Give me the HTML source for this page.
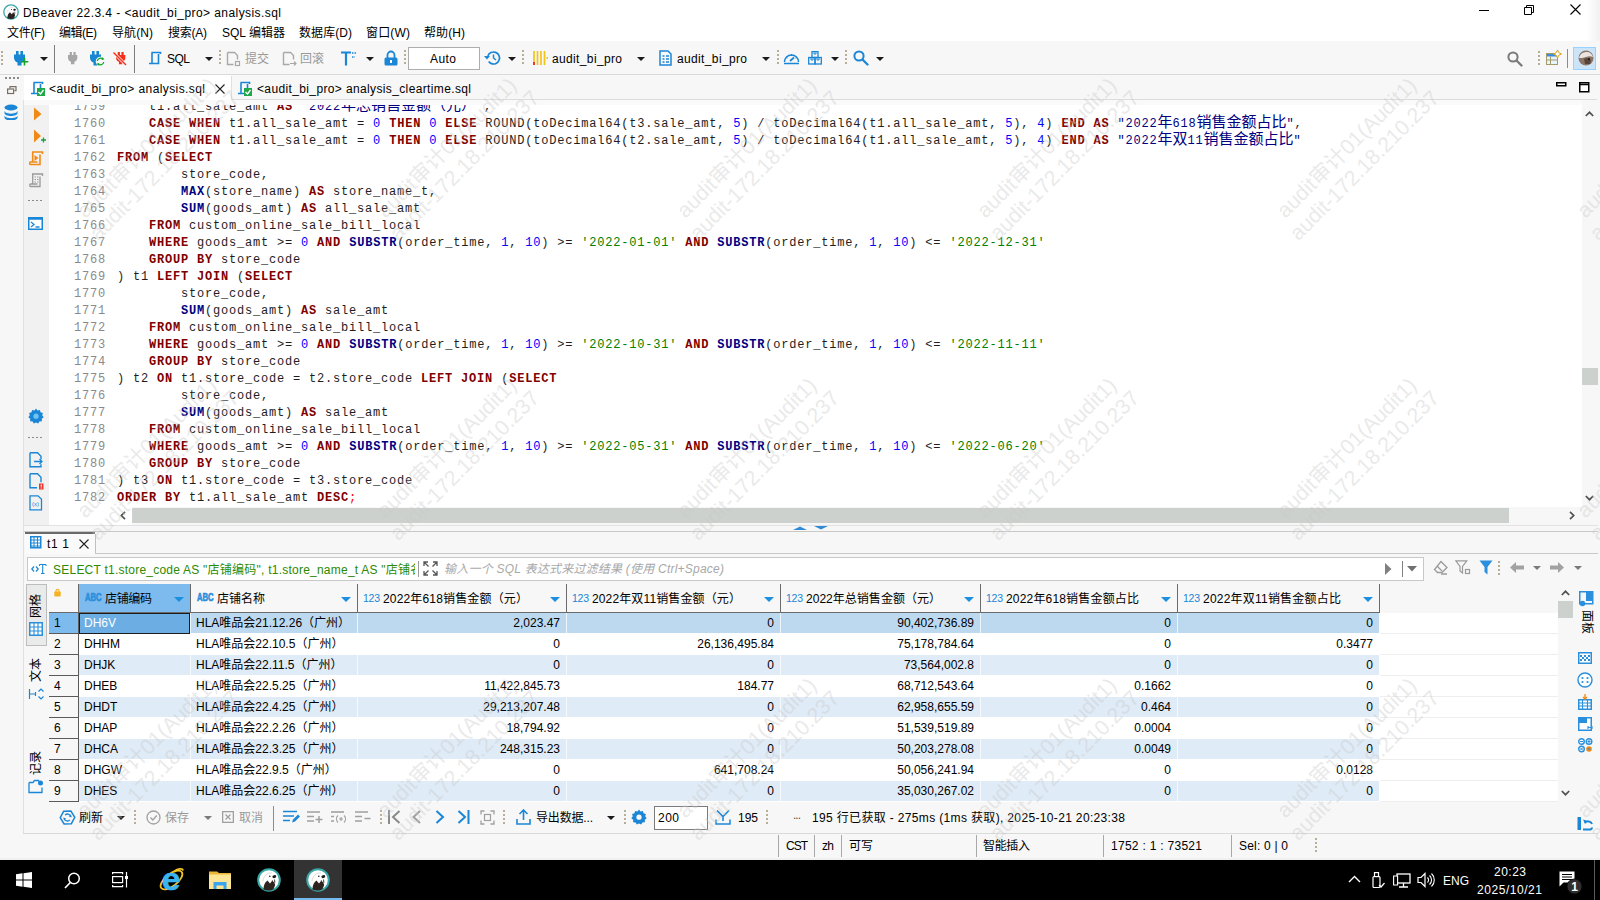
<!DOCTYPE html>
<html lang="zh-CN"><head><meta charset="utf-8"><title>DBeaver 22.3.4 - &lt;audit_bi_pro&gt; analysis.sql</title>
<style>
html,body{margin:0;padding:0}
body{width:1600px;height:900px;position:relative;overflow:hidden;background:#f7f7f7;font-family:"Liberation Sans","Noto Sans CJK SC",sans-serif;font-size:12px;color:#000}
.t{position:absolute;white-space:pre;display:block}
.g{color:#9a9a9a}
#ed{position:absolute;left:49px;top:105px;width:1533px;height:402px;background:#fff;overflow:hidden}
.ln{position:absolute;left:0;height:17px;line-height:19px;white-space:pre;font-family:"Liberation Mono","Noto Sans CJK SC",monospace;font-size:12px;letter-spacing:.8px;color:#1e1e1e;padding-left:68px}
.ln .no{position:absolute;left:25px;color:#8a8a8a}
.ln b.k{color:#7f0000}
.ln b.f{color:#000080}
.ln .n{color:#0000ff}
.ln .s{color:#008000}
.ln .q{color:#000080}
.ln .r{color:#ff0000}
.ln i.c{font-style:normal;font-size:15px;letter-spacing:0;line-height:17px;vertical-align:0}
.wm{position:absolute;width:300px;height:300px;pointer-events:none}
.wm div{position:absolute;left:-44px;top:132px;width:400px;text-align:center;transform:rotate(-45deg);color:rgba(200,200,200,.4);font-size:21.3px;line-height:25px;white-space:pre}
.cell{position:absolute;height:21px;line-height:21px;white-space:pre;overflow:hidden;box-sizing:border-box}
.num{text-align:right}
</style></head>
<body>
<div class="" style="position:absolute;left:0px;top:0px;width:1600px;height:41px;background:#fff;"></div>
<div class="" style="position:absolute;left:1586px;top:0px;width:14px;height:41px;background:linear-gradient(to right,#fff,#f1f1f1);"></div>
<svg style="position:absolute;left:3px;top:4px;" width="16" height="16" viewBox="0 0 24 24"><circle cx="12" cy="12" r="10.800" fill="#fff" stroke="#3aa7a7" stroke-width="2"/><path d="M6.500 21.500C6.500 17 8 14 10.500 12.500l2.500 3 2-2.500 2.200 1.200 1 2.800-1.700 4.200C14 23 9.500 23 6.500 21.500z" fill="#2d2420"/><path d="M15.300 12.300l1 4.200M17.500 11.500l.4 3.300" stroke="#2d2420" stroke-width=".9"/><ellipse cx="17.300" cy="8.600" rx="2" ry="1.500" fill="#1c1c1c" transform="rotate(-15 17.300 8.600)"/><circle cx="12.800" cy="8.300" r=".8" fill="#1c1c1c"/><path d="M6 13c.5-5 4-8.500 9-8" fill="none" stroke="#d8d4d0" stroke-width=".8"/></svg>
<span id="t1" class="t " style="left:23px;top:4.5px;line-height:16px;height:16px;letter-spacing:0.431px;">DBeaver 22.3.4 - &lt;audit_bi_pro&gt; analysis.sql</span>
<svg style="position:absolute;left:1479px;top:4px;" width="11" height="12" viewBox="0 0 11 12"><path d="M0 6.5h10" stroke="#000" stroke-width="1"/></svg>
<svg style="position:absolute;left:1524px;top:4px;" width="11" height="12" viewBox="0 0 11 12"><path d="M2.5 3.5v-2h7v7h-2M0.5 3.5h7v7h-7z" fill="none" stroke="#000" stroke-width="1"/></svg>
<svg style="position:absolute;left:1570px;top:4px;" width="11" height="12" viewBox="0 0 11 12"><path d="M0.5 0.5l10 10M10.5 0.5l-10 10" stroke="#000" stroke-width="1.1"/></svg>
<span id="t2" class="t " style="left:7px;top:25px;line-height:16px;height:16px;letter-spacing:-0.332px;">文件(F)</span>
<span id="t3" class="t " style="left:59px;top:25px;line-height:16px;height:16px;letter-spacing:-0.500px;">编辑(E)</span>
<span id="t4" class="t " style="left:112px;top:25px;line-height:16px;height:16px;letter-spacing:0.082px;">导航(N)</span>
<span id="t5" class="t " style="left:168px;top:25px;line-height:16px;height:16px;letter-spacing:-0.250px;">搜索(A)</span>
<span id="t6" class="t " style="left:222px;top:25px;line-height:16px;height:16px;letter-spacing:0.016px;">SQL 编辑器</span>
<span id="t7" class="t " style="left:299px;top:25px;line-height:16px;height:16px;letter-spacing:0.066px;">数据库(D)</span>
<span id="t8" class="t " style="left:366px;top:25px;line-height:16px;height:16px;letter-spacing:0.168px;">窗口(W)</span>
<span id="t9" class="t " style="left:424px;top:25px;line-height:16px;height:16px;letter-spacing:0.082px;">帮助(H)</span>
<div class="" style="position:absolute;left:0px;top:41px;width:1600px;height:33px;background:#f7f7f7;"></div>
<div class="" style="position:absolute;left:0px;top:74px;width:1600px;height:1px;background:#dadada;"></div>
<div class="" style="position:absolute;left:1px;top:51px;width:2px;height:15px;background:repeating-linear-gradient(to bottom,#b8ad96 0 2px,transparent 2px 4px);"></div>
<svg style="position:absolute;left:14px;top:51px;" width="16" height="16" viewBox="0 0 16 16"><g transform="scale(1)"><path d="M2 0h2.600v4H2zM6.400 0H9v4H6.400z" fill="#1787d3"/><path d="M0 3.500h11v3.200c0 2.800-1.800 4.300-3.500 4.800V14.500h-4V11.500C1.800 11 0 9.500 0 6.700z" fill="#1787d3"/></g><rect x="6" y="6.500" width="9" height="9" fill="#f7f7f7" opacity=".0"/><path d="M10.500 7v7.500M6.800 10.700h7.500" stroke="#12a52e" stroke-width="1.600"/></svg>
<svg style="position:absolute;left:40px;top:57px;" width="8" height="4" viewBox="0 0 8 4"><path d="M0 0h8l-4 4z" fill="#1a1a1a"/></svg>
<div class="" style="position:absolute;left:54px;top:45px;width:1px;height:28px;background:#7c7c7c;"></div>
<svg style="position:absolute;left:68px;top:52px;" width="16" height="16" viewBox="0 0 16 16"><g transform="scale(.85)"><path d="M2 0h2.600v4H2zM6.400 0H9v4H6.400z" fill="#a6a6a6"/><path d="M0 3.500h11v3.200c0 2.800-1.800 4.300-3.500 4.800V14.500h-4V11.500C1.800 11 0 9.500 0 6.700z" fill="#a6a6a6"/></g></svg>
<svg style="position:absolute;left:90px;top:51px;" width="16" height="16" viewBox="0 0 16 16"><g transform="scale(1)"><path d="M2 0h2.600v4H2zM6.400 0H9v4H6.400z" fill="#1787d3"/><path d="M0 3.500h11v3.200c0 2.800-1.800 4.300-3.500 4.800V14.500h-4V11.500C1.800 11 0 9.500 0 6.700z" fill="#1787d3"/></g><circle cx="10.500" cy="10.500" r="4.800" fill="#f7f7f7"/><path d="M7.300 10a3.300 3.300 0 0 1 5.800-1.700M13.700 11a3.300 3.300 0 0 1-5.800 1.700" fill="none" stroke="#12a52e" stroke-width="1.300"/><path d="M12.300 6.300l2.200 2-2.900.8zM8.700 14.700l-2.200-2 2.900-.8z" fill="#12a52e"/></svg>
<svg style="position:absolute;left:113px;top:52px;" width="16" height="16" viewBox="0 0 16 16"><g transform="translate(3 0) scale(.85)"><path d="M2 0h2.600v4H2zM6.400 0H9v4H6.400z" fill="#f3301b"/><path d="M0 3.500h11v3.200c0 2.800-1.800 4.300-3.500 4.800V14.500h-4V11.500C1.800 11 0 9.500 0 6.700z" fill="#f3301b"/></g><path d="M1.500 1.500l11 11" stroke="#f7f7f7" stroke-width="2.800"/><path d="M0.500 0.500l12.500 12.500" stroke="#f3301b" stroke-width="1.400"/></svg>
<div class="" style="position:absolute;left:134px;top:45px;width:1px;height:28px;background:#7c7c7c;"></div>
<svg style="position:absolute;left:147px;top:50px;" width="16" height="16" viewBox="0 0 16 16"><path d="M4.500 2.500h9v1.500M5 2.500v10.500M2 13.500h9.500V4" fill="none" stroke="#1b86d6" stroke-width="1.600"/></svg>
<span id="t10" class="t " style="left:167px;top:51px;line-height:16px;height:16px;letter-spacing:-0.508px;">SQL</span>
<svg style="position:absolute;left:205px;top:57px;" width="8" height="4" viewBox="0 0 8 4"><path d="M0 0h8l-4 4z" fill="#1a1a1a"/></svg>
<div class="" style="position:absolute;left:219px;top:50px;width:2px;height:15px;background:repeating-linear-gradient(to bottom,#b8ad96 0 2px,transparent 2px 4px);"></div>
<svg style="position:absolute;left:226px;top:51px;" width="16" height="16" viewBox="0 0 16 16"><path d="M1.500 1.500h7l3 3v4M1.500 1.500v12h6" fill="none" stroke="#a8a8a8" stroke-width="1.400"/><rect x="9.500" y="10.500" width="4" height="4" fill="none" stroke="#a8a8a8" stroke-width="1.200"/></svg>
<span id="t11" class="t g" style="left:245px;top:51px;line-height:16px;height:16px;letter-spacing:-0.016px;">提交</span>
<svg style="position:absolute;left:282px;top:51px;" width="16" height="16" viewBox="0 0 16 16"><path d="M1.500 1.500h7l3 3v4M1.500 1.500v12h6" fill="none" stroke="#a8a8a8" stroke-width="1.400"/><path d="M8 12.500h6M12 10.500l2 2-2 2" fill="none" stroke="#a8a8a8" stroke-width="1.200"/></svg>
<span id="t12" class="t g" style="left:300px;top:51px;line-height:16px;height:16px;letter-spacing:-0.016px;">回滚</span>
<svg style="position:absolute;left:341px;top:50px;" width="16" height="16" viewBox="0 0 16 16"><path d="M0 2.500h10M5 2.500v13" stroke="#1b86d6" stroke-width="2.200"/><path d="M11 3h5M11 7h3" stroke="#1b86d6" stroke-width="1.400" stroke-dasharray="1.500 1"/></svg>
<svg style="position:absolute;left:366px;top:57px;" width="8" height="4" viewBox="0 0 8 4"><path d="M0 0h8l-4 4z" fill="#1a1a1a"/></svg>
<svg style="position:absolute;left:384px;top:50px;" width="14" height="16" viewBox="0 0 14 16"><path d="M3.500 8V5a3.500 3.500 0 0 1 7 0v3" fill="none" stroke="#1b86d6" stroke-width="1.800"/><rect x="0.500" y="7.500" width="13" height="8" rx="1.500" fill="#1b86d6"/><rect x="6" y="10" width="2" height="3" fill="#fff"/></svg>
<div class="" style="position:absolute;left:404px;top:50px;width:2px;height:15px;background:repeating-linear-gradient(to bottom,#b8ad96 0 2px,transparent 2px 4px);"></div>
<div class="" style="position:absolute;left:408px;top:47px;width:70px;height:21px;background:#fff;border:1px solid #adadad;"></div>
<span id="t13" class="t " style="left:430px;top:51px;line-height:16px;height:16px;letter-spacing:0.438px;">Auto</span>
<svg style="position:absolute;left:484px;top:50px;" width="17" height="16" viewBox="0 0 17 16"><circle cx="9.500" cy="8" r="6" fill="none" stroke="#1b86d6" stroke-width="1.700" stroke-dasharray="31 6.700" transform="rotate(200 9.500 8)"/><path d="M9.500 4.500V8l2.500 2" fill="none" stroke="#1b86d6" stroke-width="1.500"/><path d="M0 6l3 3.500L6 6z" fill="#1b86d6"/></svg>
<svg style="position:absolute;left:508px;top:57px;" width="8" height="4" viewBox="0 0 8 4"><path d="M0 0h8l-4 4z" fill="#1a1a1a"/></svg>
<div class="" style="position:absolute;left:522px;top:50px;width:2px;height:15px;background:repeating-linear-gradient(to bottom,#b8ad96 0 2px,transparent 2px 4px);"></div>
<svg style="position:absolute;left:532px;top:50px;" width="16" height="16" viewBox="0 0 16 16"><path d="M2 1v14M5.500 1v14M9 1v14M12.500 1v14" stroke="#f2c31a" stroke-width="1.700"/><rect x="1" y="12" width="2" height="3" fill="#e8372c"/><rect x="14.500" y="7" width="1.500" height="2" fill="#f2c31a"/></svg>
<span id="t14" class="t " style="left:552px;top:51px;line-height:16px;height:16px;letter-spacing:0.358px;">audit_bi_pro</span>
<svg style="position:absolute;left:637px;top:57px;" width="8" height="4" viewBox="0 0 8 4"><path d="M0 0h8l-4 4z" fill="#1a1a1a"/></svg>
<svg style="position:absolute;left:659px;top:50px;" width="13" height="16" viewBox="0 0 13 16"><path d="M1 1h8l3 3v11H1z" fill="none" stroke="#1b86d6" stroke-width="1.500"/><path d="M3.500 6h2M7 6h3M3.500 9h2M7 9h3M3.500 12h2M7 12h3" stroke="#1b86d6" stroke-width="1.300"/></svg>
<span id="t15" class="t " style="left:677px;top:51px;line-height:16px;height:16px;letter-spacing:0.358px;">audit_bi_pro</span>
<svg style="position:absolute;left:762px;top:57px;" width="8" height="4" viewBox="0 0 8 4"><path d="M0 0h8l-4 4z" fill="#1a1a1a"/></svg>
<div class="" style="position:absolute;left:777px;top:50px;width:2px;height:15px;background:repeating-linear-gradient(to bottom,#b8ad96 0 2px,transparent 2px 4px);"></div>
<svg style="position:absolute;left:783px;top:51px;" width="17" height="14" viewBox="0 0 17 14"><path d="M1.500 11a7 7 0 0 1 14 0M1 12.500h15" fill="none" stroke="#1b86d6" stroke-width="1.600"/><path d="M8.500 3v2M3 6l1.500 1M14 6l-1.500 1" stroke="#1b86d6" stroke-width="1"/><path d="M7 10l4-3.500" stroke="#1b86d6" stroke-width="1.800"/></svg>
<svg style="position:absolute;left:808px;top:51px;" width="14" height="14" viewBox="0 0 14 14"><rect x="4" y="0.500" width="6" height="6" fill="none" stroke="#1b86d6" stroke-width="1.300"/><rect x="0.700" y="6.500" width="6.300" height="6.500" fill="none" stroke="#1b86d6" stroke-width="1.300"/><rect x="7" y="6.500" width="6.300" height="6.500" fill="none" stroke="#1b86d6" stroke-width="1.300"/><path d="M6 1v2h2V1M3 7v2h2V7M9 7v2h2V7" fill="none" stroke="#1b86d6" stroke-width="1"/></svg>
<svg style="position:absolute;left:831px;top:57px;" width="8" height="4" viewBox="0 0 8 4"><path d="M0 0h8l-4 4z" fill="#1a1a1a"/></svg>
<div class="" style="position:absolute;left:845px;top:50px;width:2px;height:15px;background:repeating-linear-gradient(to bottom,#b8ad96 0 2px,transparent 2px 4px);"></div>
<svg style="position:absolute;left:853px;top:50px;" width="16" height="16" viewBox="0 0 16 16"><circle cx="6" cy="6" r="4.600" fill="none" stroke="#1b86d6" stroke-width="2"/><path d="M9.500 9.500l5 5" stroke="#1b86d6" stroke-width="2.3" stroke-linecap="round"/></svg>
<svg style="position:absolute;left:876px;top:57px;" width="8" height="4" viewBox="0 0 8 4"><path d="M0 0h8l-4 4z" fill="#1a1a1a"/></svg>
<svg style="position:absolute;left:1507px;top:51px;" width="16" height="16" viewBox="0 0 16 16"><circle cx="6" cy="6" r="4.600" fill="none" stroke="#7a7a7a" stroke-width="2"/><path d="M9.500 9.500l5 5" stroke="#7a7a7a" stroke-width="2.3" stroke-linecap="round"/></svg>
<div class="" style="position:absolute;left:1538px;top:51px;width:2px;height:15px;background:repeating-linear-gradient(to bottom,#b8ad96 0 2px,transparent 2px 4px);"></div>
<svg style="position:absolute;left:1546px;top:50px;" width="16" height="16" viewBox="0 0 16 16"><rect x="0.500" y="3.500" width="11" height="11" fill="#e8f4fb" stroke="#a49a6a" stroke-width="1"/><rect x="1" y="4" width="10" height="2.500" fill="#3a8ee0"/><path d="M4.500 6.500v8M0.500 10h11" stroke="#a49a6a" stroke-width="1"/><path d="M11.500 0l1.300 2.700 2.700 1.300-2.700 1.300-1.300 2.700-1.300-2.700L7.500 4l2.700-1.300z" fill="#fff" stroke="#d8a520" stroke-width="1"/></svg>
<div class="" style="position:absolute;left:1567px;top:49px;width:1px;height:19px;background:#8c8c8c;"></div>
<div class="" style="position:absolute;left:1573px;top:47px;width:21px;height:21px;background:#cce4f7;border:1px solid #99d1ff;"></div>
<svg style="position:absolute;left:1578px;top:50px;" width="16" height="16" viewBox="0 0 16 16"><circle cx="8" cy="8" r="7.500" fill="#8a7466"/><path d="M1 8c1-4 4-6 8-6 3 0 5 2 6 5-2-1-5-1-7 0-3 1-5 1-7 1z" fill="#e9e4df"/><path d="M6 9c2-1 5-1 7 1l-1 4H7z" fill="#5a4338"/><circle cx="11" cy="9" r="1" fill="#111"/></svg>
<div class="" style="position:absolute;left:0px;top:75px;width:1600px;height:27px;background:#f7f7f7;"></div>
<div class="" style="position:absolute;left:24px;top:75px;width:207px;height:27px;background:#fff;"></div>
<div class="" style="position:absolute;left:231px;top:99px;width:1366px;height:1px;background:#dcdcdc;"></div>
<div class="" style="position:absolute;left:231px;top:76px;width:1px;height:24px;background:#e0e0e0;"></div>
<div class="" style="position:absolute;left:5px;top:77px;width:15px;height:2px;background:repeating-linear-gradient(to right,#8a8a8a 0 2px,transparent 2px 4px);"></div>
<svg style="position:absolute;left:7px;top:86px;" width="10" height="9" viewBox="0 0 10 9"><path d="M3 2.500V0.700h6v4H7.500" fill="none" stroke="#7a6e62" stroke-width="1.200"/><rect x="0.600" y="3" width="6" height="4.500" fill="#f7f7f7" stroke="#7a6e62" stroke-width="1.200"/></svg>
<svg style="position:absolute;left:29px;top:80px;" width="16" height="16" viewBox="0 0 16 16"><path d="M4.500 2.500h9v1.500M5 2.500v10.500M2 13.500h9.500V4" fill="none" stroke="#1b86d6" stroke-width="1.600"/><rect x="8" y="8" width="8" height="8" fill="#1fa84a"/><path d="M9.500 12l2 2 3-4" fill="none" stroke="#fff" stroke-width="1.300"/></svg>
<span id="t16" class="t " style="left:49px;top:81px;line-height:16px;height:16px;letter-spacing:0.406px;">&lt;audit_bi_pro&gt; analysis.sql</span>
<svg style="position:absolute;left:215px;top:84px;" width="10" height="10" viewBox="0 0 10 10"><path d="M0.500 0.500l9 9M9.500 0.500l-9 9" stroke="#222" stroke-width="1.100"/></svg>
<svg style="position:absolute;left:236px;top:80px;" width="16" height="16" viewBox="0 0 16 16"><path d="M4.500 2.500h9v1.500M5 2.500v10.500M2 13.500h9.500V4" fill="none" stroke="#1b86d6" stroke-width="1.600"/><rect x="8" y="8" width="8" height="8" fill="#1fa84a"/><path d="M9.500 12l2 2 3-4" fill="none" stroke="#fff" stroke-width="1.300"/></svg>
<span id="t17" class="t " style="left:257px;top:81px;line-height:16px;height:16px;letter-spacing:0.367px;">&lt;audit_bi_pro&gt; analysis_cleartime.sql</span>
<svg style="position:absolute;left:1556px;top:82px;" width="11" height="5" viewBox="0 0 11 5"><rect x="0.750" y="0.750" width="9" height="3" fill="#fff" stroke="#000" stroke-width="1.500"/></svg>
<svg style="position:absolute;left:1579px;top:82px;" width="11" height="11" viewBox="0 0 11 11"><rect x="0.750" y="0.750" width="9" height="9" fill="#fff" stroke="#000" stroke-width="1.500"/><path d="M0 2.500h10" stroke="#000" stroke-width="1.500"/></svg>
<svg style="position:absolute;left:3px;top:104px;" width="17" height="16" viewBox="0 0 17 16"><ellipse cx="8" cy="3.500" rx="6.500" ry="3" fill="#1b86d6"/><path d="M1.500 6c0 4 13 4 13 0v3c0 4-13 4-13 0zM1.500 10.500c0 4 13 4 13 0v3c0 4-13 4-13 0z" fill="#1b86d6"/><path d="M1.500 6.500c0 3.500 13 3.500 13 0M1.500 11c0 3.500 13 3.500 13 0" fill="none" stroke="#fff" stroke-width="1"/></svg>
<div class="" style="position:absolute;left:24px;top:100px;width:25px;height:425px;background:#f1f1f1;"></div>
<div class="" style="position:absolute;left:24px;top:100px;width:1574px;height:5px;background:#fafafa;"></div>
<div class="" style="position:absolute;left:23px;top:100px;width:1px;height:734px;background:#e0e0e0;"></div>
<div id="ed">
<div class="ln" style="top:-7px"><span class="no">1759</span>    t1.all_sale_amt <b class="k">AS</b> <span class="q">"2022<i class="c">年总销售金额（元）</i>"</span>,</div>
<div class="ln" style="top:10px"><span class="no">1760</span>    <b class="k">CASE</b> <b class="k">WHEN</b> t1.all_sale_amt = <span class="n">0</span> <b class="k">THEN</b> <span class="n">0</span> <b class="k">ELSE</b> ROUND(toDecimal64(t3.sale_amt, <span class="n">5</span>) / toDecimal64(t1.all_sale_amt, <span class="n">5</span>), <span class="n">4</span>) <b class="k">END</b> <b class="k">AS</b> <span class="q">"2022<i class="c">年</i>618<i class="c">销售金额占比</i>"</span>,</div>
<div class="ln" style="top:27px"><span class="no">1761</span>    <b class="k">CASE</b> <b class="k">WHEN</b> t1.all_sale_amt = <span class="n">0</span> <b class="k">THEN</b> <span class="n">0</span> <b class="k">ELSE</b> ROUND(toDecimal64(t2.sale_amt, <span class="n">5</span>) / toDecimal64(t1.all_sale_amt, <span class="n">5</span>), <span class="n">4</span>) <b class="k">END</b> <b class="k">AS</b> <span class="q">"2022<i class="c">年双</i>11<i class="c">销售金额占比</i>"</span></div>
<div class="ln" style="top:44px"><span class="no">1762</span><b class="k">FROM</b> (<b class="k">SELECT</b></div>
<div class="ln" style="top:61px"><span class="no">1763</span>        store_code,</div>
<div class="ln" style="top:78px"><span class="no">1764</span>        <b class="f">MAX</b>(store_name) <b class="k">AS</b> store_name_t,</div>
<div class="ln" style="top:95px"><span class="no">1765</span>        <b class="f">SUM</b>(goods_amt) <b class="k">AS</b> all_sale_amt</div>
<div class="ln" style="top:112px"><span class="no">1766</span>    <b class="k">FROM</b> custom_online_sale_bill_local</div>
<div class="ln" style="top:129px"><span class="no">1767</span>    <b class="k">WHERE</b> goods_amt &gt;= <span class="n">0</span> <b class="k">AND</b> <b class="f">SUBSTR</b>(order_time, <span class="n">1</span>, <span class="n">10</span>) &gt;= <span class="s">'2022-01-01'</span> <b class="k">AND</b> <b class="f">SUBSTR</b>(order_time, <span class="n">1</span>, <span class="n">10</span>) &lt;= <span class="s">'2022-12-31'</span></div>
<div class="ln" style="top:146px"><span class="no">1768</span>    <b class="k">GROUP</b> <b class="k">BY</b> store_code</div>
<div class="ln" style="top:163px"><span class="no">1769</span>) t1 <b class="k">LEFT</b> <b class="k">JOIN</b> (<b class="k">SELECT</b></div>
<div class="ln" style="top:180px"><span class="no">1770</span>        store_code,</div>
<div class="ln" style="top:197px"><span class="no">1771</span>        <b class="f">SUM</b>(goods_amt) <b class="k">AS</b> sale_amt</div>
<div class="ln" style="top:214px"><span class="no">1772</span>    <b class="k">FROM</b> custom_online_sale_bill_local</div>
<div class="ln" style="top:231px"><span class="no">1773</span>    <b class="k">WHERE</b> goods_amt &gt;= <span class="n">0</span> <b class="k">AND</b> <b class="f">SUBSTR</b>(order_time, <span class="n">1</span>, <span class="n">10</span>) &gt;= <span class="s">'2022-10-31'</span> <b class="k">AND</b> <b class="f">SUBSTR</b>(order_time, <span class="n">1</span>, <span class="n">10</span>) &lt;= <span class="s">'2022-11-11'</span></div>
<div class="ln" style="top:248px"><span class="no">1774</span>    <b class="k">GROUP</b> <b class="k">BY</b> store_code</div>
<div class="ln" style="top:265px"><span class="no">1775</span>) t2 <b class="k">ON</b> t1.store_code = t2.store_code <b class="k">LEFT</b> <b class="k">JOIN</b> (<b class="k">SELECT</b></div>
<div class="ln" style="top:282px"><span class="no">1776</span>        store_code,</div>
<div class="ln" style="top:299px"><span class="no">1777</span>        <b class="f">SUM</b>(goods_amt) <b class="k">AS</b> sale_amt</div>
<div class="ln" style="top:316px"><span class="no">1778</span>    <b class="k">FROM</b> custom_online_sale_bill_local</div>
<div class="ln" style="top:333px"><span class="no">1779</span>    <b class="k">WHERE</b> goods_amt &gt;= <span class="n">0</span> <b class="k">AND</b> <b class="f">SUBSTR</b>(order_time, <span class="n">1</span>, <span class="n">10</span>) &gt;= <span class="s">'2022-05-31'</span> <b class="k">AND</b> <b class="f">SUBSTR</b>(order_time, <span class="n">1</span>, <span class="n">10</span>) &lt;= <span class="s">'2022-06-20'</span></div>
<div class="ln" style="top:350px"><span class="no">1780</span>    <b class="k">GROUP</b> <b class="k">BY</b> store_code</div>
<div class="ln" style="top:367px"><span class="no">1781</span>) t3 <b class="k">ON</b> t1.store_code = t3.store_code</div>
<div class="ln" style="top:384px"><span class="no">1782</span><b class="k">ORDER</b> <b class="k">BY</b> t1.all_sale_amt <b class="k">DESC</b><span class="r">;</span></div>

</div>
<svg style="position:absolute;left:33px;top:107px;" width="10" height="14" viewBox="0 0 10 14"><path d="M1 0.500l7.500 6.500L1 13.500z" fill="#f08a16"/></svg>
<svg style="position:absolute;left:33px;top:129px;" width="14" height="15" viewBox="0 0 14 15"><path d="M1 0.500l7 6.500L1 13.500z" fill="#f08a16"/><path d="M10.500 8.500v5M8 11h5" stroke="#18a038" stroke-width="1.300"/></svg>
<svg style="position:absolute;left:29px;top:151px;" width="15" height="15" viewBox="0 0 15 15"><path d="M3 1h10.500v2M3.700 1v10.500M11 3.500v10H1.500c-1 0-1-2.500 0-2.500h7" fill="none" stroke="#f08a16" stroke-width="1.600"/><path d="M5.500 4l4 3-4 3z" fill="#f08a16"/></svg>
<svg style="position:absolute;left:29px;top:173px;" width="15" height="15" viewBox="0 0 15 15"><path d="M3 1h10.500v2M3.700 1v10.500M11 3.500v10H1.500c-1 0-1-2.500 0-2.500h7" fill="none" stroke="#9a9a9a" stroke-width="1.300"/><path d="M5.500 4h1.500M8 4h1.500M5.500 6.500h1.500M8 6.500h1.500M5.500 9h1.500M8 9h1.500" stroke="#9a9a9a" stroke-width="1.100"/></svg>
<div class="" style="position:absolute;left:28px;top:200px;width:15px;height:1px;background:repeating-linear-gradient(to right,#8a8a8a 0 2px,transparent 2px 4px);"></div>
<svg style="position:absolute;left:28px;top:217px;" width="16" height="14" viewBox="0 0 16 14"><rect x="0.750" y="0.750" width="13.500" height="11.500" fill="#fff" stroke="#1b86d6" stroke-width="1.500"/><path d="M0 1.500h15" stroke="#1b86d6" stroke-width="2.500"/><path d="M3 5l3 2.500L3 10M7.500 10h4" fill="none" stroke="#1b86d6" stroke-width="1.300"/></svg>
<svg style="position:absolute;left:28px;top:408px;" width="16" height="16" viewBox="0 0 16 16"><path d="M8 0.500l1.500 2 2.400-.6.600 2.400 2.400.7-.700 2.300 1.500 1.900-1.900 1.500.1 2.500-2.500.2-1.200 2.200L8 14.500l-2.200 1.100-1.200-2.200-2.500-.2.100-2.500L.300 9.200l1.500-1.900-.700-2.300 2.400-.7.600-2.400 2.400.6z" fill="#1b86d6"/><circle cx="8" cy="8.200" r="2.600" fill="#6cc6f2"/></svg>
<div class="" style="position:absolute;left:28px;top:437px;width:15px;height:1px;background:repeating-linear-gradient(to right,#8a8a8a 0 2px,transparent 2px 4px);"></div>
<svg style="position:absolute;left:29px;top:452px;" width="14" height="16" viewBox="0 0 14 16"><path d="M1 0.800h7.500l3.500 3.500v3M1 0.800v14h11v-2.500" fill="none" stroke="#1b86d6" stroke-width="1.400"/><path d="M5 9.500h8M10.500 7l2.500 2.500-2.500 2.500" fill="none" stroke="#1b86d6" stroke-width="1.300"/></svg>
<svg style="position:absolute;left:29px;top:473px;" width="15" height="17" viewBox="0 0 15 17"><path d="M1 0.800h7.500l3.500 3.500v5M1 0.800v14h7" fill="none" stroke="#1b86d6" stroke-width="1.400"/><rect x="10" y="10.500" width="4.500" height="6" fill="#e8372c"/><rect x="11.700" y="11.500" width="1.100" height="2.300" fill="#fff"/><rect x="11.700" y="14.500" width="1.100" height="1" fill="#fff"/></svg>
<svg style="position:absolute;left:29px;top:495px;" width="14" height="16" viewBox="0 0 14 16"><path d="M1 0.800h8l3.500 3.500v10.500H1z" fill="none" stroke="#1b86d6" stroke-width="1.300"/></svg>
<span id="t18" class="t " style="left:32px;top:498px;line-height:12px;height:12px;font-size:6px;color:#1b86d6;">(x)</span>
<div class="" style="position:absolute;left:1582px;top:100px;width:16px;height:425px;background:#f7f7f7;"></div>
<div class="" style="position:absolute;left:1582px;top:368px;width:16px;height:17px;background:#cdd1ce;"></div>
<svg style="position:absolute;left:1585px;top:111px;" width="9" height="6" viewBox="0 0 9 6"><path d="M0.800 5l3.700-3.700L8.200 5" fill="none" stroke="#505050" stroke-width="1.700"/></svg>
<svg style="position:absolute;left:1585px;top:495px;" width="9" height="6" viewBox="0 0 9 6"><path d="M0.800 1l3.700 3.700L8.200 1" fill="none" stroke="#505050" stroke-width="1.700"/></svg>
<div class="" style="position:absolute;left:49px;top:507px;width:1532px;height:18px;background:#f7f7f7;"></div>
<div class="" style="position:absolute;left:49px;top:507px;width:83px;height:18px;background:#fff;"></div>
<div class="" style="position:absolute;left:132px;top:508px;width:1377px;height:15px;background:#cdd1ce;"></div>
<svg style="position:absolute;left:120px;top:511px;" width="6" height="9" viewBox="0 0 6 9"><path d="M5 0.800L1.300 4.500 5 8.200" fill="none" stroke="#505050" stroke-width="1.700"/></svg>
<svg style="position:absolute;left:1569px;top:511px;" width="6" height="9" viewBox="0 0 6 9"><path d="M1 0.800l3.700 3.700L1 8.200" fill="none" stroke="#505050" stroke-width="1.700"/></svg>
<div class="" style="position:absolute;left:24px;top:525px;width:1574px;height:7px;background:#f7f7f7;"></div>
<div class="" style="position:absolute;left:24px;top:525px;width:1574px;height:1px;background:#e2e2e2;"></div>
<svg style="position:absolute;left:793px;top:526px;" width="14" height="4" viewBox="0 0 14 4"><path d="M0 4l7-3.500L14 4z" fill="#2f8ad8"/></svg>
<svg style="position:absolute;left:814px;top:526px;" width="14" height="4" viewBox="0 0 14 4"><path d="M0 0h14l-7 3.500z" fill="#2f8ad8"/></svg>
<div class="" style="position:absolute;left:24px;top:531px;width:1574px;height:1px;background:#c9c9c9;"></div>
<div class="" style="position:absolute;left:24px;top:532px;width:1574px;height:326px;background:#f7f7f7;"></div>
<div class="" style="position:absolute;left:25px;top:532px;width:70px;height:22px;background:#fafafa;"></div>
<div class="" style="position:absolute;left:25px;top:532px;width:70px;height:2px;background:#6a6a6a;"></div>
<div class="" style="position:absolute;left:95px;top:534px;width:1px;height:20px;background:#c0c0c0;"></div>
<div class="" style="position:absolute;left:95px;top:553px;width:1503px;height:1px;background:#c9c9c9;"></div>
<svg style="position:absolute;left:30px;top:536px;" width="12" height="13" viewBox="0 0 12 13"><rect x="0.750" y="0.750" width="10" height="11" fill="#fff" stroke="#1b86d6" stroke-width="1.500"/><path d="M0 4h11M0 7h11M0 10h11M4 0v12M7.500 0v12" stroke="#1b86d6" stroke-width="1"/></svg>
<span id="t19" class="t " style="left:47px;top:536px;line-height:16px;height:16px;letter-spacing:0.661px;">t1 1</span>
<svg style="position:absolute;left:79px;top:539px;" width="10" height="10" viewBox="0 0 10 10"><path d="M0.500 0.500l9 9M9.500 0.500l-9 9" stroke="#222" stroke-width="1.100"/></svg>
<div class="" style="position:absolute;left:27px;top:557px;width:1397px;height:24px;background:#fff;border:1px solid #c8c8c8;box-sizing:border-box;"></div>
<svg style="position:absolute;left:31px;top:563px;" width="16" height="12" viewBox="0 0 16 12"><path d="M3 3.500L0.800 6 3 8.500M5 3.500L7.200 6 5 8.500" fill="none" stroke="#1b86d6" stroke-width="1.200"/><path d="M8.500 1.500h6.500M11.700 1.500v9M10 10.500h3.500M8.500 1.500v1.500M15 1.500v1.500" fill="none" stroke="#1b86d6" stroke-width="1.100"/></svg>
<div style="position:absolute;left:53px;top:560px;width:362px;height:18px;overflow:hidden">
<span id="t20" class="t " style="left:0px;top:2px;line-height:16px;height:16px;letter-spacing:0.233px;color:#2c8a00;">SELECT t1.store_code AS "店铺编码", t1.store_name_t AS "店铺名称"</span>
</div>
<div class="" style="position:absolute;left:418px;top:561px;width:1px;height:16px;background:#9a9a9a;"></div>
<svg style="position:absolute;left:423px;top:561px;" width="15" height="15" viewBox="0 0 15 15"><path d="M1 5V1h4M1 1l4.500 4.500M14 5V1h-4M14 1L9.500 5.500M1 10v4h4M1 14l4.500-4.500M14 10v4h-4M14 14L9.500 9.500" fill="none" stroke="#555" stroke-width="1.300"/></svg>
<span id="t21" class="t " style="left:444px;top:561px;line-height:17px;height:17px;letter-spacing:0.224px;color:#a8a8a8;font-style:italic;">输入一个 SQL 表达式来过滤结果 (使用 Ctrl+Space)</span>
<svg style="position:absolute;left:1385px;top:563px;" width="7" height="12" viewBox="0 0 7 12"><path d="M0 0l6.500 6-6.500 6z" fill="#808080"/></svg>
<div class="" style="position:absolute;left:1402px;top:561px;width:1px;height:16px;background:#808080;"></div>
<svg style="position:absolute;left:1407px;top:566px;" width="10" height="6" viewBox="0 0 10 6"><path d="M0 0h10l-5 5.500z" fill="#707070"/></svg>
<svg style="position:absolute;left:1432px;top:560px;" width="17" height="15" viewBox="0 0 17 15"><path d="M9 1.500l6 6-5 5H5.500l-3-3z" fill="none" stroke="#9a9a9a" stroke-width="1.300"/><path d="M5 6l5 5M9 14h6" stroke="#9a9a9a" stroke-width="1.300"/></svg>
<svg style="position:absolute;left:1455px;top:560px;" width="16" height="15" viewBox="0 0 16 15"><path d="M0.800 0.800h11L7.500 6.500v6.500L5 11V6.500z" fill="none" stroke="#9a9a9a" stroke-width="1.200"/><rect x="10.500" y="9.500" width="4" height="4" fill="none" stroke="#9a9a9a" stroke-width="1.200"/></svg>
<svg style="position:absolute;left:1479px;top:560px;" width="14" height="15" viewBox="0 0 14 15"><path d="M0.500 0.500h13L8.500 7v7.500L5.500 12V7z" fill="#2a8fdc"/></svg>
<div class="" style="position:absolute;left:1498px;top:561px;width:2px;height:15px;background:repeating-linear-gradient(to bottom,#b8ad96 0 2px,transparent 2px 4px);"></div>
<svg style="position:absolute;left:1510px;top:562px;" width="14" height="11" viewBox="0 0 14 11"><path d="M0 5.500L6 0v3.500h8v4H6V11z" fill="#a2a2a2"/></svg>
<svg style="position:absolute;left:1533px;top:566px;" width="8" height="4" viewBox="0 0 8 4"><path d="M0 0h8l-4 4z" fill="#7a7a7a"/></svg>
<svg style="position:absolute;left:1550px;top:562px;" width="14" height="11" viewBox="0 0 14 11"><path d="M14 5.500L8 0v3.500H0v4h8V11z" fill="#a2a2a2"/></svg>
<svg style="position:absolute;left:1574px;top:566px;" width="8" height="4" viewBox="0 0 8 4"><path d="M0 0h8l-4 4z" fill="#7a7a7a"/></svg>
<div class="" style="position:absolute;left:26px;top:584px;width:21px;height:62px;background:#e8ebe9;border:1px solid #bdbdbd;box-sizing:border-box;"></div>
<span id="t22" class="t " style="left:6px;top:598px;line-height:16px;height:16px;width:60px;text-align:center;transform:rotate(-90deg);">网格</span>
<svg style="position:absolute;left:29px;top:622px;" width="14" height="14" viewBox="0 0 14 14"><rect x="0.750" y="0.750" width="12.500" height="12.500" fill="#fff" stroke="#2a8fdc" stroke-width="1.500"/><path d="M0 5h14M0 9h14M5 0v14M9 0v14" stroke="#2a8fdc" stroke-width="1.100"/></svg>
<span id="t23" class="t " style="left:6px;top:662px;line-height:16px;height:16px;width:60px;text-align:center;transform:rotate(-90deg);">文本</span>
<svg style="position:absolute;left:30px;top:686px;transform:rotate(-90deg);" width="12" height="16" viewBox="0 0 12 16"><path d="M1 1.500h10M6 1.500v6M4 7.500h4" fill="none" stroke="#1b86d6" stroke-width="1.200"/><path d="M3.500 10.500L1 13l2.500 2.500M8.500 10.500L11 13l-2.500 2.500" fill="none" stroke="#1b86d6" stroke-width="1.200"/></svg>
<span id="t24" class="t " style="left:6px;top:755px;line-height:16px;height:16px;width:60px;text-align:center;transform:rotate(-90deg);">记录</span>
<svg style="position:absolute;left:28px;top:778px;" width="16" height="16" viewBox="0 0 16 16"><path d="M1 4.500h4l1.500-2h4l1 2M1 4.500v10h13v-5" fill="none" stroke="#1b86d6" stroke-width="1.300"/><circle cx="12.500" cy="5" r="2.500" fill="#1b86d6"/></svg>
<div class="" style="position:absolute;left:49px;top:584px;width:1509px;height:218px;background:#fff;"></div>
<div class="" style="position:absolute;left:49px;top:584px;width:1509px;height:29px;background:#f7f7f7;"></div>
<div class="" style="position:absolute;left:79px;top:584px;width:112px;height:28px;background:#7dbaee;"></div>
<svg style="position:absolute;left:54px;top:588px;" width="7" height="9" viewBox="0 0 7 9"><path d="M2 4V2.800a1.500 1.500 0 0 1 3 0V4" fill="none" stroke="#f5b324" stroke-width="1.200"/><rect x="0.300" y="3.500" width="6.400" height="5" rx=".8" fill="#f5b324"/></svg>
<span id="t25" class="t " style="left:85px;top:592px;line-height:12px;height:12px;font-size:10px;font-weight:bold;color:#2a8fdc;transform:scaleX(.77);transform-origin:0 0;-webkit-text-stroke:.6px #2a8fdc;">ABC</span>
<span id="t26" class="t " style="left:105px;top:591px;line-height:16px;height:16px;letter-spacing:-0.339px;">店铺编码</span>
<svg style="position:absolute;left:174px;top:597px;" width="10" height="5" viewBox="0 0 10 5"><path d="M0 0h10l-5 5z" fill="#1b8fe0"/></svg>
<div class="" style="position:absolute;left:190px;top:584px;width:1px;height:28px;background:#6a6a6a;"></div>
<span id="t27" class="t " style="left:197px;top:592px;line-height:12px;height:12px;font-size:10px;font-weight:bold;color:#2a8fdc;transform:scaleX(.77);transform-origin:0 0;-webkit-text-stroke:.6px #2a8fdc;">ABC</span>
<span id="t28" class="t " style="left:217px;top:591px;line-height:16px;height:16px;letter-spacing:-0.005px;">店铺名称</span>
<svg style="position:absolute;left:341px;top:597px;" width="10" height="5" viewBox="0 0 10 5"><path d="M0 0h10l-5 5z" fill="#1b8fe0"/></svg>
<div class="" style="position:absolute;left:357px;top:584px;width:1px;height:28px;background:#6a6a6a;"></div>
<span id="t29" class="t " style="left:363px;top:591px;line-height:14px;height:14px;letter-spacing:-0.266px;font-size:10.500px;color:#1b86d6;">123</span>
<span id="t30" class="t " style="left:383px;top:591px;line-height:16px;height:16px;letter-spacing:0.163px;">2022年618销售金额（元）</span>
<svg style="position:absolute;left:550px;top:597px;" width="10" height="5" viewBox="0 0 10 5"><path d="M0 0h10l-5 5z" fill="#1b8fe0"/></svg>
<div class="" style="position:absolute;left:566px;top:584px;width:1px;height:28px;background:#6a6a6a;"></div>
<span id="t31" class="t " style="left:572px;top:591px;line-height:14px;height:14px;letter-spacing:-0.266px;font-size:10.500px;color:#1b86d6;">123</span>
<span id="t32" class="t " style="left:592px;top:591px;line-height:16px;height:16px;letter-spacing:0.132px;">2022年双11销售金额（元）</span>
<svg style="position:absolute;left:764px;top:597px;" width="10" height="5" viewBox="0 0 10 5"><path d="M0 0h10l-5 5z" fill="#1b8fe0"/></svg>
<div class="" style="position:absolute;left:780px;top:584px;width:1px;height:28px;background:#6a6a6a;"></div>
<span id="t33" class="t " style="left:786px;top:591px;line-height:14px;height:14px;letter-spacing:-0.266px;font-size:10.500px;color:#1b86d6;">123</span>
<span id="t34" class="t " style="left:806px;top:591px;line-height:16px;height:16px;letter-spacing:0.025px;">2022年总销售金额（元）</span>
<svg style="position:absolute;left:964px;top:597px;" width="10" height="5" viewBox="0 0 10 5"><path d="M0 0h10l-5 5z" fill="#1b8fe0"/></svg>
<div class="" style="position:absolute;left:980px;top:584px;width:1px;height:28px;background:#6a6a6a;"></div>
<span id="t35" class="t " style="left:986px;top:591px;line-height:14px;height:14px;letter-spacing:-0.266px;font-size:10.500px;color:#1b86d6;">123</span>
<span id="t36" class="t " style="left:1006px;top:591px;line-height:16px;height:16px;letter-spacing:0.175px;">2022年618销售金额占比</span>
<svg style="position:absolute;left:1161px;top:597px;" width="10" height="5" viewBox="0 0 10 5"><path d="M0 0h10l-5 5z" fill="#1b8fe0"/></svg>
<div class="" style="position:absolute;left:1177px;top:584px;width:1px;height:28px;background:#6a6a6a;"></div>
<span id="t37" class="t " style="left:1183px;top:591px;line-height:14px;height:14px;letter-spacing:-0.266px;font-size:10.500px;color:#1b86d6;">123</span>
<span id="t38" class="t " style="left:1203px;top:591px;line-height:16px;height:16px;letter-spacing:0.219px;">2022年双11销售金额占比</span>
<svg style="position:absolute;left:1363px;top:597px;" width="10" height="5" viewBox="0 0 10 5"><path d="M0 0h10l-5 5z" fill="#1b8fe0"/></svg>
<div class="" style="position:absolute;left:1379px;top:584px;width:1px;height:28px;background:#6a6a6a;"></div>
<div class="" style="position:absolute;left:78px;top:584px;width:1px;height:28px;background:#6a6a6a;"></div>
<div class="" style="position:absolute;left:49px;top:612px;width:1331px;height:1px;background:#6a6a6a;"></div>
<div class="" style="position:absolute;left:79px;top:613px;width:1300px;height:20px;background:#bdd9f0;"></div>
<div class="" style="position:absolute;left:49px;top:613px;width:29px;height:21px;background:#7dbaee;"></div>
<div class="" style="position:absolute;left:49px;top:633px;width:29px;height:1px;background:#5a5a5a;"></div>
<span id="t39" class="t " style="left:54px;top:615px;line-height:17px;height:17px;">1</span>
<div class="" style="position:absolute;left:79px;top:613px;width:111px;height:21px;background:#6caee4;border:1px solid #1c1c1c;box-sizing:border-box;"></div>
<span id="t40" class="t " style="left:84px;top:615px;line-height:17px;height:17px;color:#fff;">DH6V</span>
<span id="t41" class="t " style="left:196px;top:615px;line-height:17px;height:17px;">HLA唯品会21.12.26（广州）</span>
<span id="t42" class="t " style="left:358px;top:615px;line-height:17px;height:17px;width:202px;text-align:right;">2,023.47</span>
<span id="t43" class="t " style="left:567px;top:615px;line-height:17px;height:17px;width:207px;text-align:right;">0</span>
<span id="t44" class="t " style="left:781px;top:615px;line-height:17px;height:17px;width:193px;text-align:right;">90,402,736.89</span>
<span id="t45" class="t " style="left:981px;top:615px;line-height:17px;height:17px;width:190px;text-align:right;">0</span>
<span id="t46" class="t " style="left:1178px;top:615px;line-height:17px;height:17px;width:195px;text-align:right;">0</span>
<div class="" style="position:absolute;left:190px;top:613px;width:1px;height:21px;background:rgba(255,255,255,.75);"></div>
<div class="" style="position:absolute;left:357px;top:613px;width:1px;height:21px;background:rgba(255,255,255,.75);"></div>
<div class="" style="position:absolute;left:566px;top:613px;width:1px;height:21px;background:rgba(255,255,255,.75);"></div>
<div class="" style="position:absolute;left:780px;top:613px;width:1px;height:21px;background:rgba(255,255,255,.75);"></div>
<div class="" style="position:absolute;left:980px;top:613px;width:1px;height:21px;background:rgba(255,255,255,.75);"></div>
<div class="" style="position:absolute;left:1177px;top:613px;width:1px;height:21px;background:rgba(255,255,255,.75);"></div>
<div class="" style="position:absolute;left:1380px;top:633px;width:178px;height:1px;background:#eeeeee;"></div>
<div class="" style="position:absolute;left:79px;top:634px;width:1300px;height:20px;background:#fff;"></div>
<div class="" style="position:absolute;left:49px;top:634px;width:29px;height:21px;background:#f7f7f7;"></div>
<div class="" style="position:absolute;left:49px;top:654px;width:29px;height:1px;background:#5a5a5a;"></div>
<span id="t47" class="t " style="left:54px;top:636px;line-height:17px;height:17px;">2</span>
<span id="t48" class="t " style="left:84px;top:636px;line-height:17px;height:17px;color:#000;">DHHM</span>
<span id="t49" class="t " style="left:196px;top:636px;line-height:17px;height:17px;">HLA唯品会22.10.5（广州）</span>
<span id="t50" class="t " style="left:358px;top:636px;line-height:17px;height:17px;width:202px;text-align:right;">0</span>
<span id="t51" class="t " style="left:567px;top:636px;line-height:17px;height:17px;width:207px;text-align:right;">26,136,495.84</span>
<span id="t52" class="t " style="left:781px;top:636px;line-height:17px;height:17px;width:193px;text-align:right;">75,178,784.64</span>
<span id="t53" class="t " style="left:981px;top:636px;line-height:17px;height:17px;width:190px;text-align:right;">0</span>
<span id="t54" class="t " style="left:1178px;top:636px;line-height:17px;height:17px;width:195px;text-align:right;">0.3477</span>
<div class="" style="position:absolute;left:190px;top:634px;width:1px;height:21px;background:rgba(255,255,255,.75);"></div>
<div class="" style="position:absolute;left:357px;top:634px;width:1px;height:21px;background:rgba(255,255,255,.75);"></div>
<div class="" style="position:absolute;left:566px;top:634px;width:1px;height:21px;background:rgba(255,255,255,.75);"></div>
<div class="" style="position:absolute;left:780px;top:634px;width:1px;height:21px;background:rgba(255,255,255,.75);"></div>
<div class="" style="position:absolute;left:980px;top:634px;width:1px;height:21px;background:rgba(255,255,255,.75);"></div>
<div class="" style="position:absolute;left:1177px;top:634px;width:1px;height:21px;background:rgba(255,255,255,.75);"></div>
<div class="" style="position:absolute;left:1380px;top:654px;width:178px;height:1px;background:#eeeeee;"></div>
<div class="" style="position:absolute;left:79px;top:655px;width:1300px;height:20px;background:#dfebf7;"></div>
<div class="" style="position:absolute;left:49px;top:655px;width:29px;height:21px;background:#f7f7f7;"></div>
<div class="" style="position:absolute;left:49px;top:675px;width:29px;height:1px;background:#5a5a5a;"></div>
<span id="t55" class="t " style="left:54px;top:657px;line-height:17px;height:17px;">3</span>
<span id="t56" class="t " style="left:84px;top:657px;line-height:17px;height:17px;color:#000;">DHJK</span>
<span id="t57" class="t " style="left:196px;top:657px;line-height:17px;height:17px;">HLA唯品会22.11.5（广州）</span>
<span id="t58" class="t " style="left:358px;top:657px;line-height:17px;height:17px;width:202px;text-align:right;">0</span>
<span id="t59" class="t " style="left:567px;top:657px;line-height:17px;height:17px;width:207px;text-align:right;">0</span>
<span id="t60" class="t " style="left:781px;top:657px;line-height:17px;height:17px;width:193px;text-align:right;">73,564,002.8</span>
<span id="t61" class="t " style="left:981px;top:657px;line-height:17px;height:17px;width:190px;text-align:right;">0</span>
<span id="t62" class="t " style="left:1178px;top:657px;line-height:17px;height:17px;width:195px;text-align:right;">0</span>
<div class="" style="position:absolute;left:190px;top:655px;width:1px;height:21px;background:rgba(255,255,255,.75);"></div>
<div class="" style="position:absolute;left:357px;top:655px;width:1px;height:21px;background:rgba(255,255,255,.75);"></div>
<div class="" style="position:absolute;left:566px;top:655px;width:1px;height:21px;background:rgba(255,255,255,.75);"></div>
<div class="" style="position:absolute;left:780px;top:655px;width:1px;height:21px;background:rgba(255,255,255,.75);"></div>
<div class="" style="position:absolute;left:980px;top:655px;width:1px;height:21px;background:rgba(255,255,255,.75);"></div>
<div class="" style="position:absolute;left:1177px;top:655px;width:1px;height:21px;background:rgba(255,255,255,.75);"></div>
<div class="" style="position:absolute;left:1380px;top:675px;width:178px;height:1px;background:#eeeeee;"></div>
<div class="" style="position:absolute;left:79px;top:676px;width:1300px;height:20px;background:#fff;"></div>
<div class="" style="position:absolute;left:49px;top:676px;width:29px;height:21px;background:#f7f7f7;"></div>
<div class="" style="position:absolute;left:49px;top:696px;width:29px;height:1px;background:#5a5a5a;"></div>
<span id="t63" class="t " style="left:54px;top:678px;line-height:17px;height:17px;">4</span>
<span id="t64" class="t " style="left:84px;top:678px;line-height:17px;height:17px;color:#000;">DHEB</span>
<span id="t65" class="t " style="left:196px;top:678px;line-height:17px;height:17px;">HLA唯品会22.5.25（广州）</span>
<span id="t66" class="t " style="left:358px;top:678px;line-height:17px;height:17px;width:202px;text-align:right;">11,422,845.73</span>
<span id="t67" class="t " style="left:567px;top:678px;line-height:17px;height:17px;width:207px;text-align:right;">184.77</span>
<span id="t68" class="t " style="left:781px;top:678px;line-height:17px;height:17px;width:193px;text-align:right;">68,712,543.64</span>
<span id="t69" class="t " style="left:981px;top:678px;line-height:17px;height:17px;width:190px;text-align:right;">0.1662</span>
<span id="t70" class="t " style="left:1178px;top:678px;line-height:17px;height:17px;width:195px;text-align:right;">0</span>
<div class="" style="position:absolute;left:190px;top:676px;width:1px;height:21px;background:rgba(255,255,255,.75);"></div>
<div class="" style="position:absolute;left:357px;top:676px;width:1px;height:21px;background:rgba(255,255,255,.75);"></div>
<div class="" style="position:absolute;left:566px;top:676px;width:1px;height:21px;background:rgba(255,255,255,.75);"></div>
<div class="" style="position:absolute;left:780px;top:676px;width:1px;height:21px;background:rgba(255,255,255,.75);"></div>
<div class="" style="position:absolute;left:980px;top:676px;width:1px;height:21px;background:rgba(255,255,255,.75);"></div>
<div class="" style="position:absolute;left:1177px;top:676px;width:1px;height:21px;background:rgba(255,255,255,.75);"></div>
<div class="" style="position:absolute;left:1380px;top:696px;width:178px;height:1px;background:#eeeeee;"></div>
<div class="" style="position:absolute;left:79px;top:697px;width:1300px;height:20px;background:#dfebf7;"></div>
<div class="" style="position:absolute;left:49px;top:697px;width:29px;height:21px;background:#f7f7f7;"></div>
<div class="" style="position:absolute;left:49px;top:717px;width:29px;height:1px;background:#5a5a5a;"></div>
<span id="t71" class="t " style="left:54px;top:699px;line-height:17px;height:17px;">5</span>
<span id="t72" class="t " style="left:84px;top:699px;line-height:17px;height:17px;color:#000;">DHDT</span>
<span id="t73" class="t " style="left:196px;top:699px;line-height:17px;height:17px;">HLA唯品会22.4.25（广州）</span>
<span id="t74" class="t " style="left:358px;top:699px;line-height:17px;height:17px;width:202px;text-align:right;">29,213,207.48</span>
<span id="t75" class="t " style="left:567px;top:699px;line-height:17px;height:17px;width:207px;text-align:right;">0</span>
<span id="t76" class="t " style="left:781px;top:699px;line-height:17px;height:17px;width:193px;text-align:right;">62,958,655.59</span>
<span id="t77" class="t " style="left:981px;top:699px;line-height:17px;height:17px;width:190px;text-align:right;">0.464</span>
<span id="t78" class="t " style="left:1178px;top:699px;line-height:17px;height:17px;width:195px;text-align:right;">0</span>
<div class="" style="position:absolute;left:190px;top:697px;width:1px;height:21px;background:rgba(255,255,255,.75);"></div>
<div class="" style="position:absolute;left:357px;top:697px;width:1px;height:21px;background:rgba(255,255,255,.75);"></div>
<div class="" style="position:absolute;left:566px;top:697px;width:1px;height:21px;background:rgba(255,255,255,.75);"></div>
<div class="" style="position:absolute;left:780px;top:697px;width:1px;height:21px;background:rgba(255,255,255,.75);"></div>
<div class="" style="position:absolute;left:980px;top:697px;width:1px;height:21px;background:rgba(255,255,255,.75);"></div>
<div class="" style="position:absolute;left:1177px;top:697px;width:1px;height:21px;background:rgba(255,255,255,.75);"></div>
<div class="" style="position:absolute;left:1380px;top:717px;width:178px;height:1px;background:#eeeeee;"></div>
<div class="" style="position:absolute;left:79px;top:718px;width:1300px;height:20px;background:#fff;"></div>
<div class="" style="position:absolute;left:49px;top:718px;width:29px;height:21px;background:#f7f7f7;"></div>
<div class="" style="position:absolute;left:49px;top:738px;width:29px;height:1px;background:#5a5a5a;"></div>
<span id="t79" class="t " style="left:54px;top:720px;line-height:17px;height:17px;">6</span>
<span id="t80" class="t " style="left:84px;top:720px;line-height:17px;height:17px;color:#000;">DHAP</span>
<span id="t81" class="t " style="left:196px;top:720px;line-height:17px;height:17px;">HLA唯品会22.2.26（广州）</span>
<span id="t82" class="t " style="left:358px;top:720px;line-height:17px;height:17px;width:202px;text-align:right;">18,794.92</span>
<span id="t83" class="t " style="left:567px;top:720px;line-height:17px;height:17px;width:207px;text-align:right;">0</span>
<span id="t84" class="t " style="left:781px;top:720px;line-height:17px;height:17px;width:193px;text-align:right;">51,539,519.89</span>
<span id="t85" class="t " style="left:981px;top:720px;line-height:17px;height:17px;width:190px;text-align:right;">0.0004</span>
<span id="t86" class="t " style="left:1178px;top:720px;line-height:17px;height:17px;width:195px;text-align:right;">0</span>
<div class="" style="position:absolute;left:190px;top:718px;width:1px;height:21px;background:rgba(255,255,255,.75);"></div>
<div class="" style="position:absolute;left:357px;top:718px;width:1px;height:21px;background:rgba(255,255,255,.75);"></div>
<div class="" style="position:absolute;left:566px;top:718px;width:1px;height:21px;background:rgba(255,255,255,.75);"></div>
<div class="" style="position:absolute;left:780px;top:718px;width:1px;height:21px;background:rgba(255,255,255,.75);"></div>
<div class="" style="position:absolute;left:980px;top:718px;width:1px;height:21px;background:rgba(255,255,255,.75);"></div>
<div class="" style="position:absolute;left:1177px;top:718px;width:1px;height:21px;background:rgba(255,255,255,.75);"></div>
<div class="" style="position:absolute;left:1380px;top:738px;width:178px;height:1px;background:#eeeeee;"></div>
<div class="" style="position:absolute;left:79px;top:739px;width:1300px;height:20px;background:#dfebf7;"></div>
<div class="" style="position:absolute;left:49px;top:739px;width:29px;height:21px;background:#f7f7f7;"></div>
<div class="" style="position:absolute;left:49px;top:759px;width:29px;height:1px;background:#5a5a5a;"></div>
<span id="t87" class="t " style="left:54px;top:741px;line-height:17px;height:17px;">7</span>
<span id="t88" class="t " style="left:84px;top:741px;line-height:17px;height:17px;color:#000;">DHCA</span>
<span id="t89" class="t " style="left:196px;top:741px;line-height:17px;height:17px;">HLA唯品会22.3.25（广州）</span>
<span id="t90" class="t " style="left:358px;top:741px;line-height:17px;height:17px;width:202px;text-align:right;">248,315.23</span>
<span id="t91" class="t " style="left:567px;top:741px;line-height:17px;height:17px;width:207px;text-align:right;">0</span>
<span id="t92" class="t " style="left:781px;top:741px;line-height:17px;height:17px;width:193px;text-align:right;">50,203,278.08</span>
<span id="t93" class="t " style="left:981px;top:741px;line-height:17px;height:17px;width:190px;text-align:right;">0.0049</span>
<span id="t94" class="t " style="left:1178px;top:741px;line-height:17px;height:17px;width:195px;text-align:right;">0</span>
<div class="" style="position:absolute;left:190px;top:739px;width:1px;height:21px;background:rgba(255,255,255,.75);"></div>
<div class="" style="position:absolute;left:357px;top:739px;width:1px;height:21px;background:rgba(255,255,255,.75);"></div>
<div class="" style="position:absolute;left:566px;top:739px;width:1px;height:21px;background:rgba(255,255,255,.75);"></div>
<div class="" style="position:absolute;left:780px;top:739px;width:1px;height:21px;background:rgba(255,255,255,.75);"></div>
<div class="" style="position:absolute;left:980px;top:739px;width:1px;height:21px;background:rgba(255,255,255,.75);"></div>
<div class="" style="position:absolute;left:1177px;top:739px;width:1px;height:21px;background:rgba(255,255,255,.75);"></div>
<div class="" style="position:absolute;left:1380px;top:759px;width:178px;height:1px;background:#eeeeee;"></div>
<div class="" style="position:absolute;left:79px;top:760px;width:1300px;height:20px;background:#fff;"></div>
<div class="" style="position:absolute;left:49px;top:760px;width:29px;height:21px;background:#f7f7f7;"></div>
<div class="" style="position:absolute;left:49px;top:780px;width:29px;height:1px;background:#5a5a5a;"></div>
<span id="t95" class="t " style="left:54px;top:762px;line-height:17px;height:17px;">8</span>
<span id="t96" class="t " style="left:84px;top:762px;line-height:17px;height:17px;color:#000;">DHGW</span>
<span id="t97" class="t " style="left:196px;top:762px;line-height:17px;height:17px;">HLA唯品会22.9.5（广州）</span>
<span id="t98" class="t " style="left:358px;top:762px;line-height:17px;height:17px;width:202px;text-align:right;">0</span>
<span id="t99" class="t " style="left:567px;top:762px;line-height:17px;height:17px;width:207px;text-align:right;">641,708.24</span>
<span id="t100" class="t " style="left:781px;top:762px;line-height:17px;height:17px;width:193px;text-align:right;">50,056,241.94</span>
<span id="t101" class="t " style="left:981px;top:762px;line-height:17px;height:17px;width:190px;text-align:right;">0</span>
<span id="t102" class="t " style="left:1178px;top:762px;line-height:17px;height:17px;width:195px;text-align:right;">0.0128</span>
<div class="" style="position:absolute;left:190px;top:760px;width:1px;height:21px;background:rgba(255,255,255,.75);"></div>
<div class="" style="position:absolute;left:357px;top:760px;width:1px;height:21px;background:rgba(255,255,255,.75);"></div>
<div class="" style="position:absolute;left:566px;top:760px;width:1px;height:21px;background:rgba(255,255,255,.75);"></div>
<div class="" style="position:absolute;left:780px;top:760px;width:1px;height:21px;background:rgba(255,255,255,.75);"></div>
<div class="" style="position:absolute;left:980px;top:760px;width:1px;height:21px;background:rgba(255,255,255,.75);"></div>
<div class="" style="position:absolute;left:1177px;top:760px;width:1px;height:21px;background:rgba(255,255,255,.75);"></div>
<div class="" style="position:absolute;left:1380px;top:780px;width:178px;height:1px;background:#eeeeee;"></div>
<div class="" style="position:absolute;left:79px;top:781px;width:1300px;height:20px;background:#dfebf7;"></div>
<div class="" style="position:absolute;left:49px;top:781px;width:29px;height:21px;background:#f7f7f7;"></div>
<div class="" style="position:absolute;left:49px;top:801px;width:29px;height:1px;background:#5a5a5a;"></div>
<span id="t103" class="t " style="left:54px;top:783px;line-height:17px;height:17px;">9</span>
<span id="t104" class="t " style="left:84px;top:783px;line-height:17px;height:17px;color:#000;">DHES</span>
<span id="t105" class="t " style="left:196px;top:783px;line-height:17px;height:17px;">HLA唯品会22.6.25（广州）</span>
<span id="t106" class="t " style="left:358px;top:783px;line-height:17px;height:17px;width:202px;text-align:right;">0</span>
<span id="t107" class="t " style="left:567px;top:783px;line-height:17px;height:17px;width:207px;text-align:right;">0</span>
<span id="t108" class="t " style="left:781px;top:783px;line-height:17px;height:17px;width:193px;text-align:right;">35,030,267.02</span>
<span id="t109" class="t " style="left:981px;top:783px;line-height:17px;height:17px;width:190px;text-align:right;">0</span>
<span id="t110" class="t " style="left:1178px;top:783px;line-height:17px;height:17px;width:195px;text-align:right;">0</span>
<div class="" style="position:absolute;left:190px;top:781px;width:1px;height:21px;background:rgba(255,255,255,.75);"></div>
<div class="" style="position:absolute;left:357px;top:781px;width:1px;height:21px;background:rgba(255,255,255,.75);"></div>
<div class="" style="position:absolute;left:566px;top:781px;width:1px;height:21px;background:rgba(255,255,255,.75);"></div>
<div class="" style="position:absolute;left:780px;top:781px;width:1px;height:21px;background:rgba(255,255,255,.75);"></div>
<div class="" style="position:absolute;left:980px;top:781px;width:1px;height:21px;background:rgba(255,255,255,.75);"></div>
<div class="" style="position:absolute;left:1177px;top:781px;width:1px;height:21px;background:rgba(255,255,255,.75);"></div>
<div class="" style="position:absolute;left:1380px;top:801px;width:178px;height:1px;background:#eeeeee;"></div>
<div class="" style="position:absolute;left:78px;top:613px;width:1px;height:189px;background:#5a5a5a;"></div>
<div class="" style="position:absolute;left:1558px;top:584px;width:16px;height:218px;background:#f7f7f7;"></div>
<svg style="position:absolute;left:1561px;top:590px;" width="9" height="6" viewBox="0 0 9 6"><path d="M0.800 5l3.700-3.700L8.200 5" fill="none" stroke="#505050" stroke-width="1.700"/></svg>
<svg style="position:absolute;left:1561px;top:790px;" width="9" height="6" viewBox="0 0 9 6"><path d="M0.800 1l3.700 3.700L8.200 1" fill="none" stroke="#505050" stroke-width="1.700"/></svg>
<div class="" style="position:absolute;left:1558px;top:601px;width:15px;height:17px;background:#cdd1ce;"></div>
<svg style="position:absolute;left:1579px;top:591px;" width="15" height="17" viewBox="0 0 15 17"><rect x="0.750" y="0.750" width="13" height="12" fill="none" stroke="#2a8fdc" stroke-width="1.500"/><rect x="7" y="1" width="6.500" height="9" fill="#2a8fdc"/><circle cx="3.500" cy="12.500" r="2.800" fill="#2a8fdc"/></svg>
<span id="t111" class="t " style="left:1557px;top:614px;line-height:16px;height:16px;width:60px;text-align:center;transform:rotate(90deg);">面板</span>
<svg style="position:absolute;left:1578px;top:652px;" width="14" height="12" viewBox="0 0 14 12"><rect x="0.750" y="0.750" width="12.500" height="10.500" fill="#fff" stroke="#2a8fdc" stroke-width="1.500"/><path d="M2 3h2v2H2zM6 3h2v2H6zM10 3h2v2h-2zM4 5h2v2H4zM8 5h2v2H8zM2 7h2v2H2zM6 7h2v2H6zM10 7h2v2h-2z" fill="#2a8fdc"/></svg>
<svg style="position:absolute;left:1577px;top:672px;" width="16" height="16" viewBox="0 0 16 16"><circle cx="8" cy="8" r="7" fill="#fff" stroke="#2a8fdc" stroke-width="1.400"/><circle cx="5.500" cy="6" r="1.100" fill="#2a8fdc"/><circle cx="10.500" cy="6" r="1.100" fill="#2a8fdc"/><circle cx="5.500" cy="10" r="1.100" fill="#2a8fdc"/><circle cx="10.500" cy="10" r="1.100" fill="#2a8fdc"/></svg>
<svg style="position:absolute;left:1578px;top:694px;" width="14" height="16" viewBox="0 0 14 16"><rect x="0.750" y="5.750" width="12.500" height="9.500" fill="#fff" stroke="#2a8fdc" stroke-width="1.500"/><path d="M0 9h14M0 12h14M4.500 5v10M9.500 5v10" stroke="#2a8fdc" stroke-width="1.100"/><path d="M7 0v5M5 3l2 2 2-2" fill="none" stroke="#f08a16" stroke-width="1.300"/></svg>
<svg style="position:absolute;left:1578px;top:717px;" width="15" height="14" viewBox="0 0 15 14"><rect x="0.750" y="0.750" width="12.500" height="12.500" fill="#fff" stroke="#2a8fdc" stroke-width="1.500"/><rect x="1" y="1" width="8" height="5" fill="#2a8fdc"/><path d="M10 10.500h4M10 9v3M14 9v3" stroke="#2a8fdc" stroke-width="1.100"/></svg>
<svg style="position:absolute;left:1578px;top:738px;" width="15" height="15" viewBox="0 0 15 15"><circle cx="3.500" cy="3.500" r="2.800" fill="none" stroke="#2a8fdc" stroke-width="1.400"/><circle cx="11" cy="3.500" r="2.800" fill="none" stroke="#2a8fdc" stroke-width="1.400"/><circle cx="3.500" cy="11" r="2.800" fill="none" stroke="#2a8fdc" stroke-width="1.400"/><circle cx="11" cy="11" r="2.800" fill="#f08a16"/><path d="M2 3.500h3M9.500 3.500h3M11 2v3M2.300 9.800l2.400 2.400M4.700 9.800l-2.400 2.400M9.500 11h3" stroke="#2a8fdc" stroke-width="1"/></svg>
<svg style="position:absolute;left:1577px;top:816px;" width="16" height="15" viewBox="0 0 16 15"><rect x="0.500" y="1" width="3.500" height="13" fill="#1b86d6"/><path d="M6 13.500h7.500a2 2 0 0 0 1.500-2" fill="none" stroke="#1b86d6" stroke-width="2"/><path d="M8 7a4 4 0 0 1 7 1" fill="none" stroke="#1b86d6" stroke-width="2"/><path d="M6 3.500l3.500 1-1.500 3.500z" fill="#1b86d6"/></svg>
<div class="" style="position:absolute;left:23px;top:833px;width:1575px;height:1px;background:#dadada;"></div>
<svg style="position:absolute;left:59px;top:809px;" width="17" height="17" viewBox="0 0 17 17"><g transform="rotate(28 8.500 8.500)"><path d="M8.500 1.200l6.300 3.650v7.300L8.500 15.800 2.200 12.150v-7.300z" fill="none" stroke="#1b86d6" stroke-width="1.500"/><path d="M5.300 7.600a3.300 3.300 0 0 1 5.600-1.600M11.700 9.400a3.300 3.300 0 0 1-5.600 1.600" fill="none" stroke="#1b86d6" stroke-width="1.300"/><path d="M10 4.200l2.300 2.300-3 .5zM7 12.800l-2.300-2.300 3-.5z" fill="#1b86d6"/></g></svg>
<span id="t112" class="t " style="left:79px;top:810px;line-height:16px;height:16px;letter-spacing:-0.016px;">刷新</span>
<svg style="position:absolute;left:117px;top:816px;" width="8" height="4" viewBox="0 0 8 4"><path d="M0 0h8l-4 4z" fill="#1a1a1a"/></svg>
<div class="" style="position:absolute;left:134px;top:810px;width:2px;height:15px;background:repeating-linear-gradient(to bottom,#b8ad96 0 2px,transparent 2px 4px);"></div>
<svg style="position:absolute;left:146px;top:810px;" width="15" height="15" viewBox="0 0 15 15"><circle cx="7.500" cy="7.500" r="6.500" fill="none" stroke="#a0a0a0" stroke-width="1.300"/><path d="M4.500 7.500l2.300 2.500 4-4.500" fill="none" stroke="#a0a0a0" stroke-width="1.300"/></svg>
<span id="t113" class="t g" style="left:165px;top:810px;line-height:16px;height:16px;letter-spacing:-0.016px;">保存</span>
<svg style="position:absolute;left:204px;top:816px;" width="8" height="4" viewBox="0 0 8 4"><path d="M0 0h8l-4 4z" fill="#7a7a7a"/></svg>
<svg style="position:absolute;left:222px;top:811px;" width="12" height="12" viewBox="0 0 12 12"><rect x="0.650" y="0.650" width="10.700" height="10.700" fill="none" stroke="#a0a0a0" stroke-width="1.300"/><path d="M3.500 3.500l5 5M8.500 3.500l-5 5" stroke="#a0a0a0" stroke-width="1.200"/></svg>
<span id="t114" class="t g" style="left:239px;top:810px;line-height:16px;height:16px;letter-spacing:-0.016px;">取消</span>
<div class="" style="position:absolute;left:273px;top:806px;width:1px;height:25px;background:#8c8c8c;"></div>
<svg style="position:absolute;left:283px;top:810px;" width="17" height="14" viewBox="0 0 17 14"><path d="M0 1.500h14M0 6h11M0 10.500h7" stroke="#1b86d6" stroke-width="1.700"/><path d="M9 12.500l1-3 5-5 2 2-5 5z" fill="#1b86d6"/></svg>
<svg style="position:absolute;left:307px;top:810px;" width="16" height="14" viewBox="0 0 16 14"><path d="M0 2h13M0 6.500h7M0 11h7" stroke="#a0a0a0" stroke-width="1.600"/><path d="M12 6v7M8.500 9.500h7" stroke="#a0a0a0" stroke-width="1.500"/></svg>
<svg style="position:absolute;left:331px;top:810px;" width="16" height="14" viewBox="0 0 16 14"><path d="M0 2h13" stroke="#a0a0a0" stroke-width="1.600"/><path d="M0 6.500h3M0 11h3" stroke="#a0a0a0" stroke-width="1.600"/><path d="M7 5.500c-2 2-2 5 0 7M13 5.500c2 2 2 5 0 7M8 9h4M10 7v4" fill="none" stroke="#a0a0a0" stroke-width="1.200"/></svg>
<svg style="position:absolute;left:355px;top:810px;" width="16" height="14" viewBox="0 0 16 14"><path d="M0 2h13M0 6.500h7M0 11h7M9.500 8.500h6" stroke="#a0a0a0" stroke-width="1.600"/></svg>
<div class="" style="position:absolute;left:380px;top:810px;width:2px;height:15px;background:repeating-linear-gradient(to bottom,#b8ad96 0 2px,transparent 2px 4px);"></div>
<svg style="position:absolute;left:388px;top:810px;" width="13" height="14" viewBox="0 0 13 14"><path d="M1 0v14M11.500 1L5 7 11.500 13" fill="none" stroke="#8a8a8a" stroke-width="2"/></svg>
<svg style="position:absolute;left:410px;top:810px;" width="13" height="14" viewBox="0 0 13 14"><path d="M10 1L3.500 7 10 13" fill="none" stroke="#a0a0a0" stroke-width="2"/></svg>
<svg style="position:absolute;left:434px;top:810px;" width="13" height="14" viewBox="0 0 13 14"><path d="M2.500 1L9 7 2.500 13" fill="none" stroke="#1b86d6" stroke-width="2"/></svg>
<svg style="position:absolute;left:457px;top:810px;" width="13" height="14" viewBox="0 0 13 14"><path d="M1.500 1L8 7 1.500 13M11.500 0v14" fill="none" stroke="#1b86d6" stroke-width="2"/></svg>
<svg style="position:absolute;left:480px;top:810px;" width="15" height="15" viewBox="0 0 15 15"><path d="M1 4.500V1h3.500M10.500 1H14v3.500M14 10.500V14h-3.500M4.500 14H1v-3.500" fill="none" stroke="#a0a0a0" stroke-width="1.300"/><rect x="4.500" y="4.500" width="6" height="6" fill="none" stroke="#a0a0a0" stroke-width="1.200"/></svg>
<div class="" style="position:absolute;left:503px;top:810px;width:2px;height:15px;background:repeating-linear-gradient(to bottom,#b8ad96 0 2px,transparent 2px 4px);"></div>
<svg style="position:absolute;left:516px;top:809px;" width="15" height="16" viewBox="0 0 15 16"><path d="M7.500 11V1.500M3.500 5l4-4 4 4" fill="none" stroke="#1b86d6" stroke-width="1.600"/><path d="M1 10v5h13v-5" fill="none" stroke="#1b86d6" stroke-width="1.600"/></svg>
<span id="t115" class="t " style="left:536px;top:810px;line-height:16px;height:16px;letter-spacing:-0.169px;">导出数据...</span>
<svg style="position:absolute;left:607px;top:816px;" width="8" height="4" viewBox="0 0 8 4"><path d="M0 0h8l-4 4z" fill="#1a1a1a"/></svg>
<div class="" style="position:absolute;left:624px;top:810px;width:2px;height:15px;background:repeating-linear-gradient(to bottom,#b8ad96 0 2px,transparent 2px 4px);"></div>
<svg style="position:absolute;left:631px;top:809px;" width="16" height="16" viewBox="0 0 16 16"><path d="M8 0.500l1.500 2 2.400-.6.600 2.400 2.400.7-.700 2.300 1.500 1.900-1.900 1.500.1 2.500-2.500.2-1.200 2.200L8 14.500l-2.200 1.100-1.200-2.200-2.500-.2.100-2.500L.300 9.200l1.500-1.900-.700-2.300 2.400-.7.600-2.400 2.400.6z" fill="#1b86d6"/><circle cx="8" cy="8.200" r="2.600" fill="#f7f7f7"/></svg>
<div class="" style="position:absolute;left:654px;top:806px;width:54px;height:24px;background:#fff;border:1px solid #7a7a7a;box-sizing:border-box;"></div>
<span id="t116" class="t " style="left:658px;top:810px;line-height:16px;height:16px;letter-spacing:0.484px;">200</span>
<svg style="position:absolute;left:715px;top:810px;" width="16" height="15" viewBox="0 0 16 15"><path d="M2 0.500l6 6 6-6M8 6.500V11" fill="none" stroke="#1b86d6" stroke-width="1.600"/><path d="M1 9.500V14h14V9.500" fill="none" stroke="#1b86d6" stroke-width="1.500"/></svg>
<span id="t117" class="t " style="left:738px;top:810px;line-height:16px;height:16px;letter-spacing:-0.016px;">195</span>
<div class="" style="position:absolute;left:766px;top:810px;width:2px;height:15px;background:repeating-linear-gradient(to bottom,#b8ad96 0 2px,transparent 2px 4px);"></div>
<span id="t118" class="t " style="left:793px;top:807px;line-height:16px;height:16px;letter-spacing:-1.008px;color:#555;">...</span>
<span id="t119" class="t " style="left:812px;top:810px;line-height:16px;height:16px;letter-spacing:0.345px;">195 行已获取 - 275ms (1ms 获取), 2025-10-21 20:23:38</span>
<div class="" style="position:absolute;left:778px;top:835px;width:1px;height:22px;background:#a8a8a8;"></div>
<div class="" style="position:absolute;left:814px;top:835px;width:1px;height:22px;background:#a8a8a8;"></div>
<div class="" style="position:absolute;left:841px;top:835px;width:1px;height:22px;background:#a8a8a8;"></div>
<div class="" style="position:absolute;left:976px;top:835px;width:1px;height:22px;background:#a8a8a8;"></div>
<div class="" style="position:absolute;left:1103px;top:835px;width:1px;height:22px;background:#a8a8a8;"></div>
<div class="" style="position:absolute;left:1231px;top:835px;width:1px;height:22px;background:#a8a8a8;"></div>
<span id="t120" class="t " style="left:786px;top:837.5px;line-height:16px;height:16px;letter-spacing:-1.000px;">CST</span>
<span id="t121" class="t " style="left:822px;top:837.5px;line-height:16px;height:16px;letter-spacing:-0.688px;">zh</span>
<span id="t122" class="t " style="left:849px;top:837.5px;line-height:16px;height:16px;letter-spacing:-0.016px;">可写</span>
<span id="t123" class="t " style="left:983px;top:837.5px;line-height:16px;height:16px;letter-spacing:-0.339px;">智能插入</span>
<span id="t124" class="t " style="left:1111px;top:837.5px;line-height:16px;height:16px;letter-spacing:0.283px;">1752 : 1 : 73521</span>
<span id="t125" class="t " style="left:1239px;top:837.5px;line-height:16px;height:16px;letter-spacing:0.205px;">Sel: 0 | 0</span>
<div class="" style="position:absolute;left:1315px;top:838px;width:2px;height:15px;background:repeating-linear-gradient(to bottom,#b8ad96 0 2px,transparent 2px 4px);"></div>
<div class="" style="position:absolute;left:0px;top:858px;width:1600px;height:2px;background:#f0f0f0;"></div>
<div class="wm" style="left:0px;top:0px"><div>audit审计01(Audit1)
audit-172.18.210.237</div></div>
<div class="wm" style="left:300px;top:0px"><div>audit审计01(Audit1)
audit-172.18.210.237</div></div>
<div class="wm" style="left:600px;top:0px"><div>audit审计01(Audit1)
audit-172.18.210.237</div></div>
<div class="wm" style="left:900px;top:0px"><div>audit审计01(Audit1)
audit-172.18.210.237</div></div>
<div class="wm" style="left:1200px;top:0px"><div>audit审计01(Audit1)
audit-172.18.210.237</div></div>
<div class="wm" style="left:1500px;top:0px"><div>audit审计01(Audit1)
audit-172.18.210.237</div></div>
<div class="wm" style="left:0px;top:300px"><div>audit审计01(Audit1)
audit-172.18.210.237</div></div>
<div class="wm" style="left:300px;top:300px"><div>audit审计01(Audit1)
audit-172.18.210.237</div></div>
<div class="wm" style="left:600px;top:300px"><div>audit审计01(Audit1)
audit-172.18.210.237</div></div>
<div class="wm" style="left:900px;top:300px"><div>audit审计01(Audit1)
audit-172.18.210.237</div></div>
<div class="wm" style="left:1200px;top:300px"><div>audit审计01(Audit1)
audit-172.18.210.237</div></div>
<div class="wm" style="left:1500px;top:300px"><div>audit审计01(Audit1)
audit-172.18.210.237</div></div>
<div class="wm" style="left:0px;top:600px"><div>audit审计01(Audit1)
audit-172.18.210.237</div></div>
<div class="wm" style="left:300px;top:600px"><div>audit审计01(Audit1)
audit-172.18.210.237</div></div>
<div class="wm" style="left:600px;top:600px"><div>audit审计01(Audit1)
audit-172.18.210.237</div></div>
<div class="wm" style="left:900px;top:600px"><div>audit审计01(Audit1)
audit-172.18.210.237</div></div>
<div class="wm" style="left:1200px;top:600px"><div>audit审计01(Audit1)
audit-172.18.210.237</div></div>
<div class="wm" style="left:1500px;top:600px"><div>audit审计01(Audit1)
audit-172.18.210.237</div></div>
<div class="" style="position:absolute;left:0px;top:860px;width:1600px;height:40px;background:#000;"></div>
<svg style="position:absolute;left:16px;top:872px;" width="16" height="16" viewBox="0 0 16 16"><path d="M0 2.200L6.500 1.300v6.200H0zM7.500 1.200L16 0v7.500H7.500zM0 8.500h6.500v6.200L0 13.800zM7.500 8.500H16V16l-8.500-1.200z" fill="#fff"/></svg>
<svg style="position:absolute;left:64px;top:872px;" width="17" height="17" viewBox="0 0 17 17"><circle cx="10" cy="6.500" r="5.300" fill="none" stroke="#fff" stroke-width="1.500"/><path d="M6.300 10.500L1 16" stroke="#fff" stroke-width="1.700"/></svg>
<svg style="position:absolute;left:111px;top:871px;" width="18" height="17" viewBox="0 0 18 17"><rect x="1.600" y="5.600" width="10" height="6" fill="none" stroke="#fff" stroke-width="1.200"/><path d="M1.600 3.200V1.600h10v1.600M1.600 14v1.600h10V14" fill="none" stroke="#fff" stroke-width="1.200"/><path d="M15.500 1v15.500" stroke="#fff" stroke-width="1.200"/><rect x="14" y="5" width="3" height="3" fill="#fff"/></svg>
<svg style="position:absolute;left:158px;top:867px;" width="28" height="26" viewBox="0 0 28 26"><ellipse cx="13.500" cy="13" rx="13" ry="6" fill="none" stroke="#f2c320" stroke-width="1.800" transform="rotate(-38 13.500 13)"/><text x="3.500" y="23" font-family="Liberation Sans, sans-serif" font-weight="bold" font-size="31" fill="#3bb4f2" transform="scale(1.080 1)" stroke="#3bb4f2" stroke-width=".6">e</text><path d="M16 4.500C20 1.500 24.500 1 25.200 3.500" fill="none" stroke="#f2c320" stroke-width="1.800"/></svg>
<svg style="position:absolute;left:208px;top:869px;" width="24" height="22" viewBox="0 0 24 22"><path d="M1 2.500h8l2 1.500h12v16H1z" fill="#e9b738"/><path d="M1 5.500h22v14.500H1z" fill="#fce594"/><rect x="5.500" y="13" width="13" height="7" fill="#3aa5ee"/><rect x="8.500" y="16.500" width="7" height="3.500" fill="#fce594"/></svg>
<svg style="position:absolute;left:257px;top:868px;" width="24" height="24" viewBox="0 0 24 24"><circle cx="12" cy="12" r="10.800" fill="#fff" stroke="#3aa7a7" stroke-width="2"/><path d="M6.500 21.500C6.500 17 8 14 10.500 12.500l2.500 3 2-2.500 2.200 1.200 1 2.800-1.700 4.200C14 23 9.500 23 6.500 21.500z" fill="#2d2420"/><path d="M15.300 12.300l1 4.200M17.500 11.500l.4 3.300" stroke="#2d2420" stroke-width=".9"/><ellipse cx="17.300" cy="8.600" rx="2" ry="1.500" fill="#1c1c1c" transform="rotate(-15 17.300 8.600)"/><circle cx="12.800" cy="8.300" r=".8" fill="#1c1c1c"/><path d="M6 13c.5-5 4-8.500 9-8" fill="none" stroke="#d8d4d0" stroke-width=".8"/></svg>
<div class="" style="position:absolute;left:294px;top:860px;width:48px;height:40px;background:#333;"></div>
<div class="" style="position:absolute;left:294px;top:898px;width:48px;height:2px;background:#76b9ed;"></div>
<svg style="position:absolute;left:306px;top:868px;" width="24" height="24" viewBox="0 0 24 24"><circle cx="12" cy="12" r="10.800" fill="#fff" stroke="#3aa7a7" stroke-width="2"/><path d="M6.500 21.500C6.500 17 8 14 10.500 12.500l2.500 3 2-2.500 2.200 1.200 1 2.800-1.700 4.200C14 23 9.500 23 6.500 21.500z" fill="#2d2420"/><path d="M15.300 12.300l1 4.200M17.500 11.500l.4 3.300" stroke="#2d2420" stroke-width=".9"/><ellipse cx="17.300" cy="8.600" rx="2" ry="1.500" fill="#1c1c1c" transform="rotate(-15 17.300 8.600)"/><circle cx="12.800" cy="8.300" r=".8" fill="#1c1c1c"/><path d="M6 13c.5-5 4-8.500 9-8" fill="none" stroke="#d8d4d0" stroke-width=".8"/></svg>
<svg style="position:absolute;left:1348px;top:875px;" width="13" height="8" viewBox="0 0 13 8"><path d="M1 7l5.500-5.500L12 7" fill="none" stroke="#fff" stroke-width="1.400"/></svg>
<svg style="position:absolute;left:1372px;top:872px;" width="13" height="17" viewBox="0 0 13 17"><rect x="1" y="4.500" width="7" height="11" rx="1" fill="none" stroke="#fff" stroke-width="1.200"/><rect x="2.500" y="0.600" width="4" height="4" fill="none" stroke="#fff" stroke-width="1.200"/><path d="M7 13l2 2 3.500-4" fill="none" stroke="#fff" stroke-width="1.200"/></svg>
<svg style="position:absolute;left:1393px;top:873px;" width="18" height="16" viewBox="0 0 18 16"><rect x="4" y="1" width="13" height="9" fill="none" stroke="#fff" stroke-width="1.300"/><path d="M10.500 10v3.500M6 14h9" stroke="#fff" stroke-width="1.300"/><path d="M0.600 3v9h4V3z" fill="#000" stroke="#fff" stroke-width="1.100"/></svg>
<svg style="position:absolute;left:1417px;top:872px;" width="18" height="16" viewBox="0 0 18 16"><path d="M1 5.500h3l4-4v13l-4-4H1z" fill="none" stroke="#fff" stroke-width="1.200"/><path d="M10.500 5.500a3.500 3.500 0 0 1 0 5M12.500 3.500a6 6 0 0 1 0 9M14.500 1.500a9 9 0 0 1 0 13" fill="none" stroke="#fff" stroke-width="1.100"/></svg>
<span id="t126" class="t " style="left:1443px;top:873px;line-height:16px;height:16px;letter-spacing:-0.008px;color:#fff;">ENG</span>
<span id="t127" class="t " style="left:1494px;top:864px;line-height:16px;height:16px;letter-spacing:0.492px;color:#fff;">20:23</span>
<span id="t128" class="t " style="left:1477px;top:882px;line-height:16px;height:16px;letter-spacing:0.549px;color:#fff;">2025/10/21</span>
<svg style="position:absolute;left:1558px;top:870px;" width="26" height="26" viewBox="0 0 26 26"><path d="M1.500 1.500h15v11h-11l-4 4z" fill="#fff"/><path d="M4 4.500h10M4 7h10M4 9.500h10" stroke="#000" stroke-width="1"/><circle cx="16.500" cy="16.500" r="7.500" fill="#2f2f2f" stroke="#0a0a0a" stroke-width="1"/><text x="16.500" y="21" text-anchor="middle" font-family="Liberation Sans, sans-serif" font-weight="bold" font-size="12" fill="#fff">1</text></svg>
<div class="" style="position:absolute;left:1594px;top:860px;width:1px;height:40px;background:#5a5a5a;"></div>
</body></html>
